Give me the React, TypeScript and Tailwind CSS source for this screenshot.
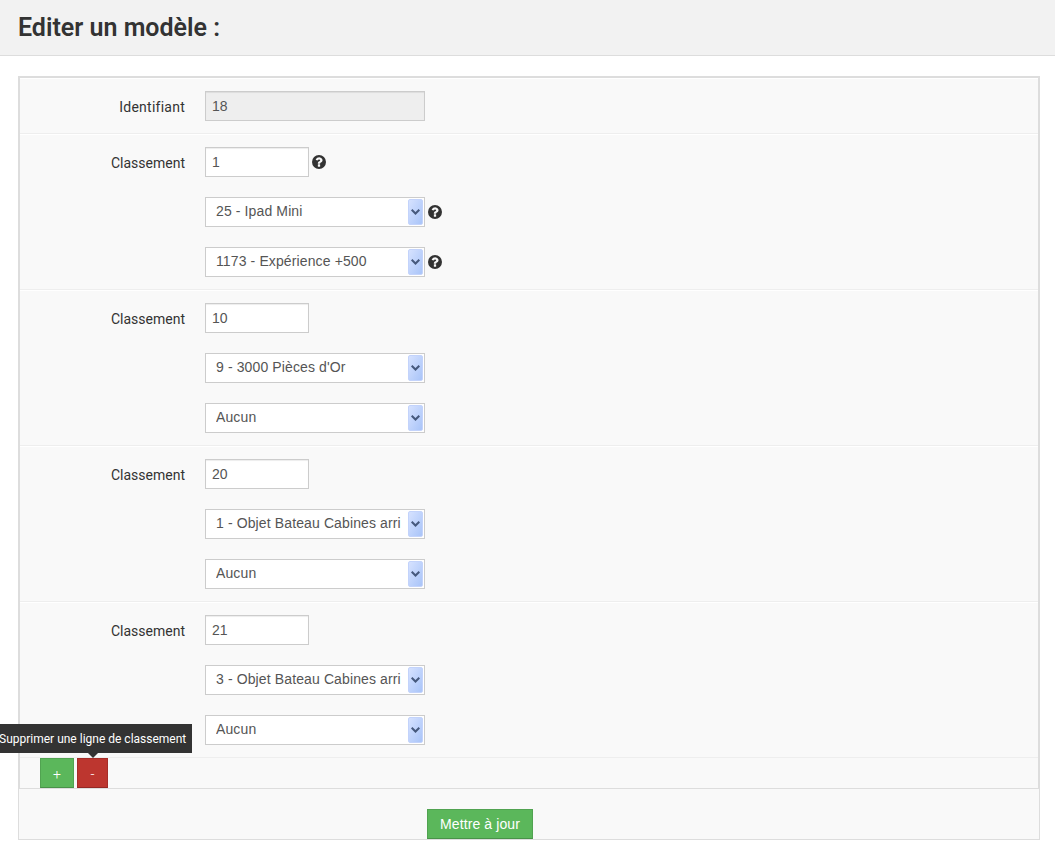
import type { ReactNode } from "react";

function HelpIcon() {
  return (
    <svg className="ml-[3px] h-[14px] w-[14px] shrink-0" viewBox="0 0 1536 1536" aria-hidden="true">
      <path
        fill="#333"
        d="M1536 768a768 768 0 1 1-1536 0a768 768 0 1 1 1536 0zM896 1248v-192q0-14-9-23t-23-9h-192q-14 0-23 9t-9 23v192q0 14 9 23t23 9h192q14 0 23-9t9-23zM1152 576q0-88-55.500-163t-138.500-116t-170-41q-243 0-371 213q-15 24 8 42l132 100q7 6 19 6q16 0 25-12q53-68 86-92q34-24 86-24q48 0 85.500 26t37.500 59q0 38-20 61t-68 45q-63 28-115.500 86.500t-52.500 125.500v36q0 14 9 23t23 9h192q14 0 23-9t9-23q0-19 21.500-49.500t54.500-49.500q32-18 49-28.500t46-35t44.500-48t28-60.500t12.500-81z"
        fillRule="evenodd"
      />
    </svg>
  );
}

function SelectBox({ value, help }: { value: string; help?: boolean }) {
  return (
    <div className="flex h-[30px] items-center">
      <div className="flex h-[30px] w-[220px] border border-[#ccc] bg-white py-px pr-px pl-[10px] font-['Liberation_Sans',Arial,sans-serif] text-[14px] leading-[25px] text-[#555]">
        <span className="flex-1 overflow-hidden whitespace-pre tracking-[0.12px]">{value}</span>
        <span className="flex h-[26px] w-[15px] shrink-0 items-center justify-center rounded-[2px] border border-[#c3d3fb] bg-linear-to-br from-[#d6e2ff] to-[#a9c4f8]">
          <svg className="h-[6px] w-[9px] shrink-0" viewBox="0 0 9 6" fill="none" stroke="#46597d" strokeWidth="2">
            <path d="M.7.7 4.500 4.500 8.300.7" />
          </svg>
        </span>
      </div>
      {help && <HelpIcon />}
    </div>
  );
}

function FormRow({ label, wide, children }: { label: string; wide?: boolean; children: ReactNode }) {
  return (
    <div className="flex border-t border-b border-t-white border-b-[#eee] py-3">
      <label className={`w-[165px] pt-[6px] text-right text-[14px] leading-5 text-[#333] ${wide ? "tracking-[0.25px]" : "tracking-normal"}`}>
        {label}
      </label>
      <div className="ml-5 flex flex-col gap-5">{children}</div>
    </div>
  );
}

const inputStyle =
  "block h-[30px] border border-[#ccc] px-[6px] font-['Liberation_Sans',Arial,sans-serif] text-[14px] leading-5 text-[#555] shadow-[inset_0_1px_1px_rgba(0,0,0,0.075)] outline-none";

const rankings = [
  { rank: "1", first: "25 - Ipad Mini", second: "1173 - Expérience +500", help: true },
  { rank: "10", first: "9 - 3000 Pièces d'Or", second: "Aucun" },
  { rank: "20", first: "1 - Objet Bateau Cabines arri", second: "Aucun" },
  { rank: "21", first: "3 - Objet Bateau Cabines arri", second: "Aucun" },
];

export default function App() {
  return (
    <div className="h-[853px] w-full overflow-hidden bg-white font-[Roboto,sans-serif] text-[#333]">
      <header className="h-14 border-b border-[#ddd] bg-[#f2f2f2] pl-[18px]">
        <h1 className="pt-2 text-[25px] leading-10 font-semibold">Editer un modèle :</h1>
      </header>
      <main className="mt-5 mr-[15px] ml-[18px] border border-[#ddd] bg-[#f9f9f9]">
        <form>
          <div className="border border-[#ddd]">
            <FormRow label="Identifiant" wide>
              <input className={`${inputStyle} w-[220px] bg-[#eee]`} defaultValue="18" readOnly />
            </FormRow>
            {rankings.map((r) => (
              <FormRow key={r.rank} label="Classement">
                <div className="flex h-[30px] items-center">
                  <input className={`${inputStyle} w-[104px] bg-white`} defaultValue={r.rank} />
                  {r.help && <HelpIcon />}
                </div>
                <SelectBox value={r.first} help={r.help} />
                <SelectBox value={r.second} help={r.help} />
              </FormRow>
            ))}
            <div className="flex gap-[3px] pl-5">
              <button type="button" className="h-[30px] w-[34px] border border-[#51a351] border-b-[#499249] bg-[#5bb75b] pt-px text-[14px] leading-5 font-light text-white">
                +
              </button>
              <div className="relative">
                <button type="button" className="block h-[30px] w-[31px] border border-[#a52d28] border-b-[#942824] bg-[#bd362f] pt-px text-[14px] leading-5 font-light text-white">
                  -
                </button>
                <div className="absolute bottom-[35px] left-[-78px] h-[29px] w-[193px] bg-[#333] text-[12px] leading-[31px] whitespace-nowrap text-white">
                  <span>Supprimer une ligne de classement</span>
                  <svg className="absolute top-[29px] left-[89px] h-[5px] w-[10px]" viewBox="0 0 10 5">
                    <path d="M0 0h10L5 5z" fill="#333" />
                  </svg>
                </div>
              </div>
            </div>
          </div>
          <div className="flex pt-5 pl-[408px]">
            <button type="button" className="h-[30px] w-[106px] border border-[#51a351] border-b-[#499249] bg-[#5bb75b] font-['Liberation_Sans',Arial,sans-serif] text-[14px] leading-5 tracking-[0.1px] text-white">
              Mettre à jour
            </button>
          </div>
        </form>
      </main>
    </div>
  );
}
